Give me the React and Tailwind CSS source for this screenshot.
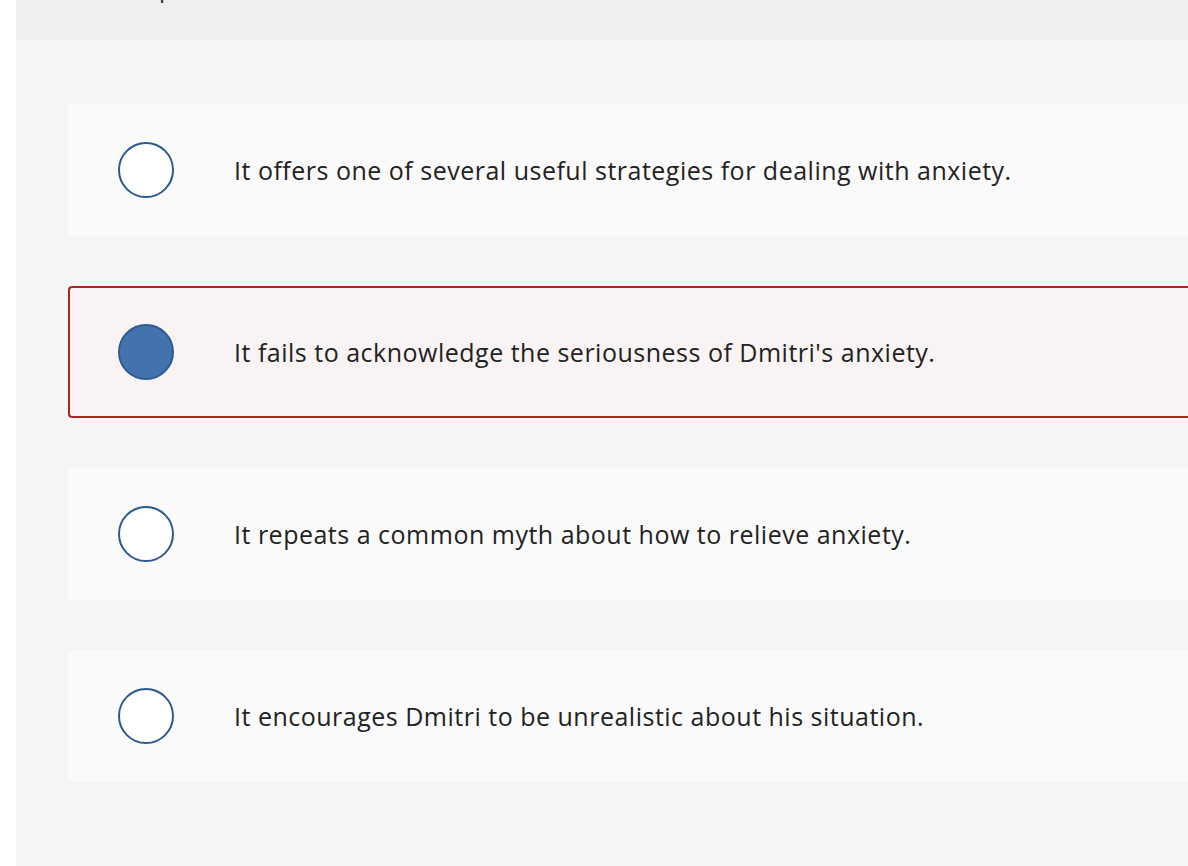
const options = [
  { text: 'It offers one of several useful strategies for dealing with anxiety.', selected: false },
  { text: "It fails to acknowledge the seriousness of Dmitri's anxiety.", selected: true },
  { text: 'It repeats a common myth about how to relieve anxiety.', selected: false },
  { text: 'It encourages Dmitri to be unrealistic about his situation.', selected: false },
];

function Option({ text, selected }) {
  return (
    <div
      className={
        selected
          ? 'h-[132px] flex items-center rounded-l-[4px] border-[2px] border-r-0 border-[#a8291f] bg-[#f9f3f3] pl-[48px]'
          : 'h-[132px] flex items-center rounded-l-[4px] bg-[#fafafa] pl-[50px]'
      }
    >
      <div
        className={
          selected
            ? 'w-[56px] h-[56px] rounded-full border-2 border-[#2e5b8f] bg-[#4472af] shrink-0'
            : 'w-[56px] h-[56px] rounded-full border-2 border-[#2c5a8f] bg-white shrink-0'
        }
      />
      <span className="ml-[60px] text-[25px] leading-[32px] text-[#222222] whitespace-nowrap tracking-[0.5px]">{text}</span>
    </div>
  );
}

export default function App() {
  return (
    <div
      className="w-[1188px] h-[866px] bg-white pl-[16px] overflow-hidden"
      style={{ fontFamily: '"Open Sans", "Noto Sans", sans-serif' }}
    >
      <div className="h-[866px] bg-[#f5f5f5] flex flex-col">
        {/* header strip, mostly scrolled off */}
        <div className="h-[40px] bg-[#efefef] overflow-hidden">
          <div className="-mt-[26px] pl-[86px] text-[24px] leading-[28px] text-[#333]">Multiple Choice</div>
        </div>
        <div className="pl-[52px] pt-[64px] flex flex-col gap-[50px]">
          {options.map((o) => (
            <Option key={o.text} {...o} />
          ))}
        </div>
      </div>
    </div>
  );
}
